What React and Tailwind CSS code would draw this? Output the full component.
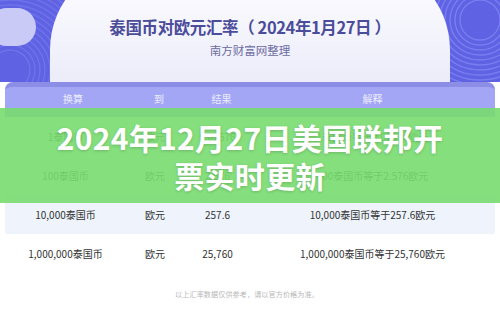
import React from 'react';

const rows = [
  { from: '1泰国币', to: '欧元', result: '0.02576', note: '1泰国币等于0.02576欧元' },
  { from: '100泰国币', to: '欧元', result: '2.576', note: '100泰国币等于2.576欧元' },
  { from: '10,000泰国币', to: '欧元', result: '257.6', note: '10,000泰国币等于257.6欧元', shade: true },
  { from: '1,000,000泰国币', to: '欧元', result: '25,760', note: '1,000,000泰国币等于25,760欧元' },
];

function Stripes({ cx, cy, opacity }) {
  const radii = [];
  for (let r = 20; r < 160; r += 5) radii.push(r);
  return (
    <svg className="absolute inset-0" width="500" height="82" viewBox="0 0 500 82">
      {radii.map((r) => (
        <circle key={r} cx={cx} cy={cy} r={r} fill="none" stroke="#8084f2" strokeWidth="1.4" opacity={opacity} />
      ))}
    </svg>
  );
}

export default function App() {
  return (
    <div className="relative w-[500px] h-[312px] overflow-hidden bg-white font-['Noto_Sans_CJK_SC',sans-serif]">
      {/* top banner */}
      <div className="relative h-[82px] bg-[#5f62e3] overflow-hidden">
        <Stripes cx={480} cy={20} opacity={0.8} />
        <Stripes cx={10} cy={70} opacity={0.5} />
        <div className="absolute left-[-12px] top-[8px] w-[48px] h-[38px] rounded-full bg-[#c9cbf6]" />
        <div className="relative mx-[50px] mt-[-40px] h-[122px] rounded-t-[90px] bg-gradient-to-b from-white to-[#ececfa] flex flex-col items-center pt-[56px]">
          <div className="text-[16.5px] leading-[22px] font-bold text-[#4b4c9a] tracking-[-0.4px]">
            泰国币对欧元汇率（ 2024年1月27日 ）
          </div>
          <div className="mt-[5px] text-[11.5px] leading-[14px] text-[#6c6ca2]">南方财富网整理</div>
        </div>
      </div>

      {/* table */}
      <div className="mx-[5px]">
        <div className="rounded-t-[8px] border-t-[5px] border-[#8c8ee6] bg-[#a3a6f4] h-[35px] grid grid-cols-[120px_60px_65px_245px] items-center text-[10px] text-white/80">
          <div className="text-center pl-[16px] -mt-[8px]">换算</div>
          <div className="text-center pl-[8px] -mt-[8px]">到</div>
          <div className="text-center pl-[8px] -mt-[8px]">结果</div>
          <div className="text-center -mt-[8px]">解释</div>
        </div>
        {rows.map((row) => (
          <div
            key={row.from}
            className={`h-[39px] grid grid-cols-[120px_60px_65px_245px] items-center text-[10px] text-[#333] rounded-[3px] ${row.shade ? 'bg-[#eef3fc]' : 'bg-white'}`}
          >
            <div className="text-center pl-[1px]">{row.from}</div>
            <div className="text-center">{row.to}</div>
            <div className="text-center">{row.result}</div>
            <div className="text-center">{row.note}</div>
          </div>
        ))}
        <div className="mt-[16px] text-center text-[7.2px] text-[#b8b8b8] pr-[6px]">
          以上汇率数据仅供参考，请以官方价格为准。
        </div>
      </div>

      {/* green overlay title */}
      <div className="absolute left-0 right-0 top-[108px] h-[95px] bg-[#78db6f]/90 flex items-center justify-center">
        <div className="w-[400px] text-center text-white font-bold text-[30px] leading-[38px] tracking-[0.3px] [text-shadow:0_1px_3px_rgba(0,0,0,0.18)]">
          2024年12月27日美国联邦开票实时更新
        </div>
      </div>
    </div>
  );
}
